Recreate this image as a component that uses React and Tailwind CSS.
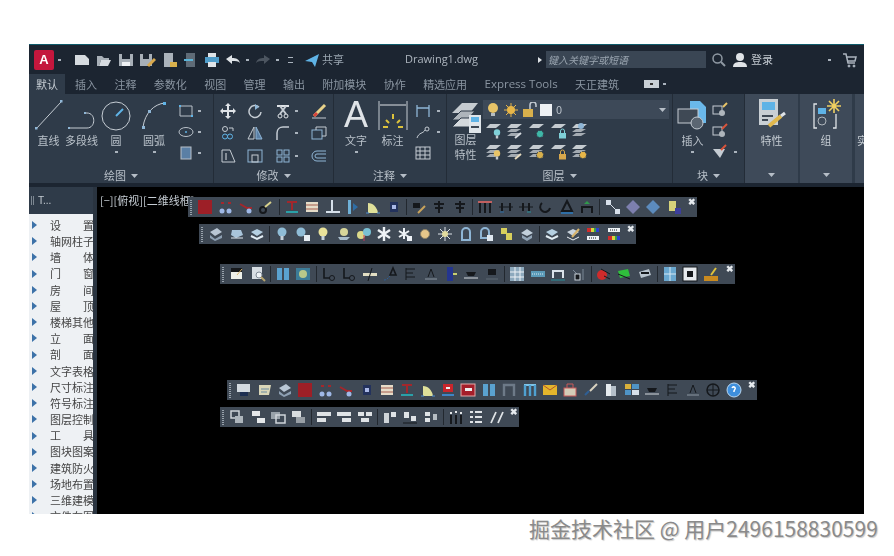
import React from "react";

const cjk = "font-['Noto_Sans_CJK_SC','Noto_Sans',sans-serif]";

const Svg = ({ w = 16, h = 16, children, className = "" }) => (
  <svg width={w} height={h} viewBox={`0 0 ${w} ${h}`} fill="none" stroke="#aeb7c1" strokeWidth="1" className={`shrink-0 ${className}`}>
    {children}
  </svg>
);

const Dot = ({ className = "" }) => <span className={`block h-[2px] w-[3px] shrink-0 bg-[#aab3bd] ${className}`} />;

const Caret = () => (
  <svg width="7" height="4" viewBox="0 0 7 4" className="shrink-0"><path d="M0 0h7L3.5 4z" fill="#b6bec7" /></svg>
);

// floating toolbar glyphs, 16 x 16
const glyphs = {
  red: <rect x="1" y="1" width="14" height="14" fill="#9d1f27" stroke="none" />,
  cols: <><path d="M3 4h3M10 4h3" stroke="#a3272c" strokeWidth="2" /><circle cx="4" cy="12" r="2.5" fill="#9fb8e6" stroke="none" /><circle cx="11" cy="12" r="2.5" fill="#9fb8e6" stroke="none" /></>,
  beam: <><path d="M2 5l7 4h5" stroke="#a3272c" strokeWidth="2" /><circle cx="11" cy="12" r="2.5" fill="#9fb8e6" stroke="none" /></>,
  gear: <><circle cx="5" cy="11" r="3" stroke="#15181c" strokeWidth="2" /><path d="M7 8l6-5" stroke="#d9d28c" strokeWidth="2" /></>,
  stair: <><path d="M3 3h10" stroke="#a3272c" strokeWidth="2" /><path d="M8 4v7" stroke="#a3272c" strokeWidth="2" /><path d="M2 13h12" stroke="#2aa0a8" strokeWidth="2" /></>,
  wall: <><rect x="2" y="3" width="12" height="10" fill="#e5dcc8" stroke="none" /><path d="M2 6h12M2 10h12" stroke="#a35d4e" /></>,
  ell: <path d="M7 1v11M1 13h14" stroke="#d6e0ea" strokeWidth="2" />,
  bar: <><rect x="3" y="1" width="3" height="14" fill="#6fb1d8" stroke="none" /><path d="M8 4l5 4-5 4z" fill="#2f6ea5" stroke="none" /></>,
  dome: <><path d="M3 14V4c5 0 9 4 10 10z" fill="#dfe09a" stroke="none" /><path d="M1 14h3M12 14h3" stroke="#4f8fd0" /></>,
  chip: <><rect x="4" y="3" width="8" height="10" fill="#23325c" stroke="none" /><rect x="6" y="6" width="4" height="4" fill="#a9b8e6" stroke="none" /></>,
  fan: <><path d="M2 4h7v5H2z" fill="#15181c" stroke="none" /><path d="M7 14l7-7" stroke="#c9a35c" strokeWidth="2" /></>,
  tree: <path d="M8 2v12M3 5h10M4 9h8" stroke="#15181c" strokeWidth="2" />,
  rails: <><path d="M1 3h14" stroke="#c26060" strokeWidth="2" /><path d="M3 4v10M8 4v10M13 4v10" stroke="#15181c" strokeWidth="2" /></>,
  dim: <><path d="M1 8h14" stroke="#15181c" /><path d="M4 4v8M12 4v8" stroke="#15181c" strokeWidth="2" /><path d="M2 13h4" stroke="#2f6ea5" /></>,
  dim2: <><path d="M1 8h14" stroke="#15181c" /><path d="M5 4v8M11 4v8" stroke="#15181c" strokeWidth="2" /><path d="M9 13h4" stroke="#2a8f9a" /></>,
  moon: <path d="M4 4a5 5 0 1 0 8 5" stroke="#15181c" strokeWidth="2" />,
  tri: <><path d="M8 2l5 10H3z" stroke="#15181c" strokeWidth="2" /><path d="M2 14h12" stroke="#2f6ea5" strokeWidth="2" /></>,
  arch: <><path d="M3 14V8h10v6" stroke="#15181c" strokeWidth="2" /><path d="M5 5l3-3 3 3z" fill="#2f9a4a" stroke="none" /></>,
  nodes: <><rect x="1" y="1" width="5" height="5" fill="#d8e0ea" stroke="none" /><path d="M4 4l8 8" stroke="#d8e0ea" /><rect x="10" y="10" width="5" height="5" fill="#d8e0ea" stroke="none" /></>,
  dia: <path d="M8 1l7 7-7 7-7-7z" fill="#7d7fae" stroke="none" />,
  dia2: <path d="M8 1l7 7-7 7-7-7z" fill="#5c8bbd" stroke="none" />,
  note: <><path d="M3 2h7v10H3z" fill="#d6d27a" stroke="none" /><rect x="9" y="9" width="6" height="6" fill="#3d3f9c" stroke="none" /></>,
  slab: <><path d="M2 6l7-4 5 4-7 4z" fill="#b9c6d4" stroke="none" /><path d="M2 9l5 4 7-4v3l-7 3-5-3z" fill="#8ea0b3" stroke="none" /></>,
  slab2: <><path d="M3 4h9l2 5-7 3-5-3z" fill="#a9c4da" stroke="none" /><path d="M2 12h12" stroke="#e5edf5" /></>,
  bulb: <><circle cx="8" cy="6" r="4.5" fill="#8fbcd6" stroke="none" /><rect x="6.5" y="10" width="3" height="4" fill="#c6d2dc" stroke="none" /></>,
  bulbDoc: <><circle cx="6" cy="6" r="4.5" fill="#8fbcd6" stroke="none" /><rect x="9" y="9" width="6" height="6" fill="#e8eef3" stroke="none" /></>,
  bulbY: <><circle cx="8" cy="6" r="4.5" fill="#e9e29a" stroke="none" /><rect x="6.5" y="10" width="3" height="4" fill="#c6d2dc" stroke="none" /></>,
  lamp: <><circle cx="8" cy="6" r="4" fill="#d8d69a" stroke="none" /><path d="M2 11h12l-3 3H4z" fill="#a9bdcc" stroke="none" /></>,
  twin: <><circle cx="5" cy="9" r="4" fill="#dcd98a" stroke="none" /><circle cx="11" cy="6" r="4" fill="#79c0d4" stroke="none" /><path d="M8 9v6" stroke="#c23a5a" /></>,
  star: <path d="M8 1v14M2 4l12 8M14 4L2 12" stroke="#eef2f6" strokeWidth="2.4" />,
  star2: <><path d="M7 2v11M2 5l10 6M12 5L2 11" stroke="#eef2f6" strokeWidth="2" /><rect x="10" y="10" width="5" height="5" fill="#eef2f6" stroke="none" /></>,
  sun: <circle cx="8" cy="8" r="4.5" fill="#e6c68a" stroke="#8d8064" />,
  sun2: <><path d="M8 1v14M1 8h14M3 3l10 10M13 3L3 13" stroke="#dfe4ea" /><circle cx="8" cy="8" r="3" fill="#e3dca0" stroke="none" /></>,
  ghost: <><path d="M4 14V6a4 4 0 0 1 8 0v8z" stroke="#8fb6d6" strokeWidth="2" /></>,
  ghost2: <><path d="M3 12V6a4 4 0 0 1 8 0v6z" stroke="#8fb6d6" strokeWidth="2" /><rect x="9" y="9" width="6" height="6" fill="#dfe8f0" stroke="none" /></>,
  tag: <><path d="M2 2h6v5h5v7H7V8H2z" fill="#d8cf5c" stroke="none" /></>,
  cake: <><path d="M2 7l6-4 6 4-6 3z" fill="#c2d0dc" stroke="none" /><path d="M3 9l5 3 5-3v3l-5 3-5-3z" fill="#93a6b8" stroke="none" /></>,
  open: <><path d="M2 6l6-3 6 3-6 4z" fill="#b5d0e2" stroke="none" /><path d="M2 10l6 3 6-3" stroke="#e3eef5" strokeWidth="2" /></>,
  pen: <><path d="M2 6l6-3 6 3-6 4z" fill="#c9d3dc" stroke="none" /><path d="M7 11l7-8" stroke="#d8b46c" strokeWidth="2" /><path d="M2 11l6 3 6-3" stroke="#eef2f6" /></>,
  rgbT: <><path d="M2 2h12v4H2z" fill="#35a04a" stroke="none" /><path d="M2 2h4v4H2z" fill="#d02b2b" stroke="none" /><path d="M6 2h3v4H6z" fill="#dcd23c" stroke="none" /><path d="M11 2h3v4h-3z" fill="#2b3fd0" stroke="none" /><rect x="2" y="10" width="12" height="4" fill="#eef2f6" stroke="none" /><path d="M4 12h8" stroke="#15181c" strokeDasharray="1 1" /></>,
  rgbB: <><rect x="2" y="2" width="12" height="4" fill="#eef2f6" stroke="none" /><path d="M4 4h8" stroke="#15181c" strokeDasharray="1 1" /><path d="M2 10h12v4H2z" fill="#35a04a" stroke="none" /><path d="M2 10h4v4H2z" fill="#d02b2b" stroke="none" /><path d="M6 10h3v4H6z" fill="#dcd23c" stroke="none" /><path d="M11 10h3v4h-3z" fill="#2b3fd0" stroke="none" /></>,
  frame: <><rect x="2" y="2" width="11" height="11" fill="#eef0ea" stroke="none" /><rect x="2" y="2" width="11" height="4" fill="#17191c" stroke="none" /><path d="M8 9l5-6" stroke="#d8b46c" /></>,
  zoom: <><rect x="2" y="1" width="10" height="12" fill="#d7dde3" stroke="none" /><circle cx="9" cy="9" r="3" fill="#eef2f6" stroke="#7f8a95" /><path d="M11 11l4 4" stroke="#b5a36c" strokeWidth="2" /></>,
  cols2: <><rect x="2" y="2" width="5" height="12" fill="#5aa2d0" stroke="none" /><rect x="9" y="2" width="5" height="12" fill="#5aa2d0" stroke="none" /></>,
  mapG: <><rect x="1" y="2" width="14" height="12" fill="#3c7c98" stroke="none" /><circle cx="8" cy="8" r="4" fill="#b9c98a" stroke="none" /></>,
  lc: <><path d="M3 2v10h6" stroke="#15181c" strokeWidth="1.6" /><circle cx="11" cy="12" r="2.5" stroke="#15181c" /></>,
  cut: <><rect x="1" y="7" width="14" height="3" fill="#e3dfc4" stroke="none" /><path d="M10 2L6 15" stroke="#15181c" /></>,
  ah: <><path d="M2 14c3 0 4-2 6-4" stroke="#2f5f95" strokeDasharray="2 1" /><path d="M8 9l3-7 3 7z" stroke="#15181c" strokeWidth="1.6" /></>,
  lines: <path d="M4 2v12M4 3h9M4 7h7M4 11h9" stroke="#15181c" />,
  ahat: <><path d="M8 3l-3 8M8 3l3 8" stroke="#15181c" /><path d="M2 13h12" stroke="#8d98a3" /></>,
  door: <><rect x="4" y="1" width="6" height="14" fill="#24358f" stroke="none" /><path d="M10 8h4" stroke="#c9cf70" strokeWidth="2" /></>,
  hat: <><path d="M3 6h10l-2 4H5z" fill="#15181c" stroke="none" /><path d="M1 12h14" stroke="#d6dbe0" /></>,
  fig: <><path d="M4 3h8v6H4z" fill="#15181c" stroke="none" /><path d="M2 13h12" stroke="#5f6a75" /></>,
  grid: <><rect x="1" y="1" width="14" height="14" fill="#8da9bd" stroke="none" /><path d="M6 1v14M11 1v14M1 6h14M1 11h14" stroke="#eef2f6" /></>,
  rule: <><rect x="1" y="5" width="14" height="6" fill="#5b9ab8" stroke="none" /><path d="M2 8h12" stroke="#dbe8ef" strokeDasharray="1 1" /></>,
  gate: <><path d="M3 12V5h10v7" stroke="#dbe3ea" strokeWidth="2" /><path d="M1 14h14" stroke="#2a8f9a" /></>,
  post: <><path d="M3 4l4 4M13 3v11" stroke="#7b8896" /><rect x="5" y="8" width="5" height="6" fill="#15181c" stroke="#c9d2da" /></>,
  ballR: <><circle cx="6" cy="9" r="5" fill="#d02b2b" stroke="none" /><path d="M5 3l9 5M8 10l6 3" stroke="#15181c" /></>,
  ballG: <><path d="M2 5l10-2 2 7-10 2z" fill="#2fbf3c" stroke="none" /><path d="M2 8l12 5" stroke="#15181c" /></>,
  ballW: <><path d="M2 6l10-3 2 6-10 3z" fill="#b9c4ce" stroke="none" /><path d="M4 7h8" stroke="#15181c" strokeWidth="2" /></>,
  tile: <><rect x="2" y="1" width="12" height="14" fill="#6aa8d0" stroke="none" /><path d="M8 1v14M2 8h12" stroke="#d6e8f3" /></>,
  target: <><rect x="1" y="1" width="14" height="14" fill="#e6eaee" stroke="#15181c" /><rect x="5" y="5" width="6" height="6" fill="#15181c" stroke="none" /></>,
  bars: <><path d="M1 10h14v5H1z" fill="#c98a20" stroke="none" /><path d="M8 9l5-7" stroke="#dfc23c" strokeWidth="2" /></>,
  deskTop: <><rect x="1" y="2" width="13" height="8" fill="#d3dae0" stroke="none" /><rect x="4" y="10" width="8" height="4" fill="#1d2f52" stroke="none" /></>,
  slip: <><path d="M2 3h12l-2 10H2z" fill="#d9d6b8" stroke="none" /><path d="M4 7h8M4 10h6" stroke="#6b8ba0" /></>,
  m2: <><path d="M2 12h12v2H2z" fill="#3f84c5" stroke="none" /><rect x="3" y="2" width="10" height="8" fill="#c9262c" stroke="none" /><rect x="6" y="5" width="4" height="2" fill="#eee" stroke="none" /></>,
  m2b: <><rect x="1" y="2" width="14" height="12" fill="#a51e2a" stroke="#e3a9a9" /><rect x="5" y="6" width="7" height="3" fill="#eee" stroke="none" /></>,
  gateB: <path d="M3 14V3h10v11" stroke="#6d7a88" strokeWidth="2.4" />,
  gateC: <><path d="M2 3h12" stroke="#7ec4e8" strokeWidth="2" /><path d="M3 14V3M8 14V3M13 14V3" stroke="#4fa0d0" strokeWidth="2.4" /></>,
  mail: <><rect x="1" y="3" width="14" height="10" fill="#e3b52c" stroke="none" /><path d="M1 3l7 5 7-5" stroke="#b3542c" /></>,
  house: <><rect x="2" y="6" width="12" height="8" fill="#d3ccb8" stroke="#c85a5a" /><path d="M5 6V2h6v4" stroke="#c85a5a" /></>,
  brush: <><path d="M14 2L7 9" stroke="#d9d2c0" strokeWidth="2" /><path d="M6 9l-4 4" stroke="#2f5f95" strokeWidth="2" /></>,
  book: <><rect x="3" y="2" width="5" height="12" fill="#e6ebef" stroke="none" /><rect x="8" y="4" width="5" height="10" fill="#b5c0ca" stroke="none" /></>,
  panes: <><rect x="1" y="2" width="6" height="5" fill="#d9b03a" stroke="none" /><rect x="8" y="2" width="7" height="5" fill="#4f93c5" stroke="none" /><rect x="1" y="8" width="6" height="5" fill="#4f93c5" stroke="none" /><rect x="8" y="8" width="7" height="5" fill="#d6e0ea" stroke="none" /></>,
  globe: <><circle cx="8" cy="8" r="6" stroke="#15181c" strokeWidth="1.5" /><path d="M2 8h12M8 2v12" stroke="#15181c" /></>,
  help: <><circle cx="8" cy="8" r="7" fill="#3f8fdc" stroke="#b9d6ef" /><path d="M6 6c1-2 4-1 3 1l-1 2v1" stroke="#fff" strokeWidth="1.5" /></>,
  s1: <><rect x="2" y="2" width="8" height="7" stroke="#cfd5da" strokeWidth="1.5" /><rect x="6" y="7" width="8" height="7" fill="#aeb6bd" stroke="none" /></>,
  s2: <><rect x="2" y="2" width="8" height="5" fill="#e5e8ea" stroke="none" /><rect x="7" y="9" width="8" height="5" fill="#e5e8ea" stroke="none" /></>,
  s3: <><rect x="1" y="3" width="9" height="7" fill="#98a1a9" stroke="none" /><rect x="6" y="6" width="9" height="8" stroke="#cfd5da" strokeWidth="1.5" /></>,
  s4: <><rect x="2" y="2" width="9" height="6" fill="#d9dde0" stroke="none" /><rect x="6" y="8" width="9" height="6" fill="#989fa6" stroke="none" /></>,
  a1: <><rect x="1" y="3" width="14" height="4" fill="#dfe3e6" stroke="none" /><rect x="1" y="9" width="9" height="4" fill="#dfe3e6" stroke="none" /></>,
  a2: <><rect x="1" y="3" width="14" height="4" fill="#dfe3e6" stroke="none" /><rect x="6" y="9" width="9" height="4" fill="#dfe3e6" stroke="none" /></>,
  a3: <><rect x="1" y="3" width="6" height="4" fill="#dfe3e6" stroke="none" /><rect x="9" y="3" width="6" height="4" fill="#dfe3e6" stroke="none" /><rect x="4" y="9" width="8" height="4" fill="#dfe3e6" stroke="none" /></>,
  b1: <><rect x="2" y="4" width="5" height="10" fill="#cfd4d8" stroke="none" /><rect x="9" y="3" width="5" height="5" fill="#dfe3e6" stroke="none" /></>,
  b2: <><rect x="2" y="3" width="5" height="6" fill="#dfe3e6" stroke="none" /><rect x="9" y="7" width="5" height="5" fill="#dfe3e6" stroke="none" /><path d="M1 14h14" stroke="#15181c" /></>,
  b3: <><rect x="2" y="3" width="5" height="4" fill="#dfe3e6" stroke="none" /><rect x="2" y="9" width="5" height="4" fill="#dfe3e6" stroke="none" /><rect x="10" y="5" width="4" height="6" fill="#b5bcc2" stroke="none" /></>,
  c1: <><path d="M3 6v9M8 6v9M13 6v9" stroke="#15181c" strokeWidth="2" /><path d="M2 4h2M7 3h2M12 4h2" stroke="#e3e6e8" strokeWidth="2" /></>,
  c2: <path d="M2 3h3M2 8h3M2 13h3M7 3h7M7 8h7M7 13h7" stroke="#dfe3e6" strokeWidth="1.8" />,
  c3: <path d="M2 14L7 3M9 14l5-11" stroke="#dfe3e6" strokeWidth="1.8" />,
};

const toolbars = [
  { top: "top-[10px]", left: "left-[91px]", w: "w-[509px]", groups: [["red", "cols", "beam", "gear"], ["stair", "wall", "ell", "bar", "dome", "chip"], ["fan", "tree", "tree"], ["rails", "dim", "dim2", "moon", "tri", "arch"], ["nodes", "dia", "dia2", "note"]] },
  { top: "top-[37px]", left: "left-[102px]", w: "w-[437px]", groups: [["slab", "slab2", "open"], ["bulb", "bulbDoc", "bulbY", "lamp", "twin", "star", "star2", "sun", "sun2", "ghost", "ghost2", "tag", "cake"], ["open", "pen", "rgbT", "rgbB"]] },
  { top: "top-[77px]", left: "left-[123px]", w: "w-[515px]", groups: [["frame", "zoom"], ["cols2", "mapG"], ["lc", "lc", "cut", "ah", "lines", "ahat", "door", "hat", "fig"], ["grid", "rule", "gate", "post"], ["ballR", "ballG", "ballW"], ["tile", "target", "bars"]] },
  { top: "top-[193px]", left: "left-[130px]", w: "w-[530px]", groups: [["deskTop", "slip", "slab", "red", "cols", "beam", "chip", "wall", "stair", "dome", "m2", "m2b", "cols2", "gateB", "gateC", "mail", "house", "brush", "book", "panes", "hat", "lines", "ahat", "globe", "help"]] },
  { top: "top-[220px]", left: "left-[123px]", w: "w-[299px]", groups: [["s1", "s2", "s3", "s4"], ["a1", "a2", "a3"], ["b1", "b2", "b3"], ["c1", "c2", "c3"]] },
];

const Toolbar = ({ bar }) => (
  <div className={`absolute flex h-[20px] items-center bg-[#3f4955] ${bar.top} ${bar.left} ${bar.w}`}>
    <span className="ml-[2px] mr-[3px] h-[15px] w-[2px] shrink-0 border-x border-dotted border-[#98a2ac]" />
    {bar.groups.map((g, i) => (
      <React.Fragment key={i}>
        {i > 0 && <span className="mx-[2px] h-[16px] w-[1px] shrink-0 bg-[#22282f]" />}
        {g.map((name, j) => (
          <span key={j} className="flex w-[20.4px] shrink-0 justify-center">
            <Svg>{glyphs[name]}</Svg>
          </span>
        ))}
      </React.Fragment>
    ))}
    <span className="ml-auto mr-[1px] self-start text-[9px] font-bold leading-[10px] text-[#e6eaee] font-['Liberation_Sans',sans-serif]">✖</span>
  </div>
);

const tabs = ["插入", "注释", "参数化", "视图", "管理", "输出", "附加模块", "协作", "精选应用", "Express Tools", "天正建筑"];

const menu = [
  ["设", "置"], ["轴网柱子"], ["墙", "体"], ["门", "窗"], ["房", "间"], ["屋", "顶"], ["楼梯其他"], ["立", "面"], ["剖", "面"],
  ["文字表格"], ["尺寸标注"], ["符号标注"], ["图层控制"], ["工", "具"], ["图块图案"], ["建筑防火"], ["场地布置"], ["三维建模"], ["文件布图"],
];

const TitleBar = () => (
  <div className="flex h-[30px] shrink-0 items-center border-t border-[#0f5b6b] bg-[#1c2531]">
    <div className="ml-[5px] flex h-[20px] w-[20px] items-center justify-center rounded-[2px] bg-[#c4173d] text-[13px] font-bold text-white font-['Liberation_Sans',sans-serif]">A</div>
    <Dot className="ml-[4px]" />
    <div className="ml-[13px] flex items-center gap-[6px]">
      <Svg><path d="M1 3h10l4 4v6H1z" fill="#d6dbe0" stroke="none" /></Svg>
      <Svg><path d="M1 4h5l2 2h5v2H5l-2 6H1z" fill="#a8b0b8" stroke="none" /><path d="M5 8h10l-3 6H3z" fill="#d6dbe0" stroke="none" /></Svg>
      <Svg><rect x="1" y="2" width="14" height="12" fill="#a8b0b8" stroke="none" /><rect x="4" y="2" width="8" height="5" fill="#1c2531" stroke="none" /><rect x="4" y="10" width="8" height="4" fill="#eef1f4" stroke="none" /></Svg>
      <Svg><rect x="0" y="2" width="12" height="12" fill="#a8b0b8" stroke="none" /><rect x="3" y="2" width="6" height="5" fill="#1c2531" stroke="none" /><path d="M8 14l7-7" stroke="#d8a84c" strokeWidth="3" /></Svg>
      <Svg><rect x="2" y="1" width="9" height="14" fill="#aab2ba" stroke="none" /><path d="M8 10h7v5H8z" fill="#d8b04c" stroke="none" /></Svg>
    </div>
    <div className="ml-[5px] flex items-center gap-[5px]">
      <Svg><rect x="3" y="1" width="9" height="14" fill="#5f6b77" stroke="none" /><path d="M1 8h9" stroke="#5cb4d8" strokeWidth="2" /></Svg>
      <Svg><rect x="4" y="1" width="8" height="4" fill="#dfe3e7" stroke="none" /><rect x="1" y="5" width="14" height="6" fill="#4f9cc9" stroke="none" /><rect x="4" y="10" width="8" height="5" fill="#dfe3e7" stroke="none" /></Svg>
      <Svg><path d="M1 7l6-4v3c4 0 7 1 8 5-2-2-4-2-8-2v3z" fill="#dfe3e7" stroke="none" /></Svg>
    </div>
    <Dot className="ml-[5px]" />
    <Svg className="ml-[6px]"><path d="M15 7L9 3v3C5 6 2 7 1 11c2-2 4-2 8-2v3z" fill="#4c5560" stroke="none" /></Svg>
    <Dot className="ml-[5px]" />
    <span className="ml-[9px] h-[6px] w-[5px] border-t border-b border-[#aab3bd]" />
    <Svg className="ml-[11px]"><path d="M1 9L15 2l-4 13-3-5z" fill="#5fb3e6" stroke="none" /></Svg>
    <span className={`ml-[2px] text-[11px] text-[#9aa5b0] ${cjk}`}>共享</span>
    <span className="ml-[61px] w-[90px] text-[11px] text-[#aeb6bf] font-['Open_Sans',sans-serif]">Drawing1.dwg</span>
    <span className="ml-[43px] h-0 w-0 border-y-[3px] border-l-[4px] border-y-transparent border-l-[#dfe3e7]" />
    <div className={`ml-[4px] flex h-[17px] w-[160px] items-center bg-[#3a4654] pl-[2px] text-[10px] italic text-[#9aa5b0] ${cjk}`}>键入关键字或短语</div>
    <Svg className="ml-[5px]"><circle cx="6.5" cy="6.5" r="4.5" stroke="#8f99a3" strokeWidth="1.5" /><path d="M10 10l4 4" stroke="#8f99a3" strokeWidth="2" /></Svg>
    <Svg className="ml-[5px]"><circle cx="8" cy="5" r="4" fill="#dfe3e7" stroke="none" /><path d="M1 15c0-4 3-5 7-5s7 1 7 5z" fill="#dfe3e7" stroke="none" /></Svg>
    <span className={`ml-[3px] text-[11px] text-[#c3cad1] ${cjk}`}>登录</span>
    <Dot className="ml-[55px]" />
    <Svg className="ml-[11px]"><path d="M1 2h3l2 9h7M5 5h9l-1 4H6" stroke="#aab3bd" strokeWidth="1.5" /><circle cx="7" cy="14" r="1" fill="#aab3bd" /><circle cx="12" cy="14" r="1" fill="#aab3bd" /></Svg>
  </div>
);

const TabBar = () => (
  <div className={`flex h-[20px] shrink-0 items-center bg-[#1c2531] text-[11px] text-[#8a95a1] ${cjk}`}>
    <div className="flex h-full w-[36px] items-center justify-center bg-[#2f3b49] text-[#c5ccd3]">默认</div>
    <div className="ml-[10px] flex items-center gap-[17.4px]">
      {tabs.map((t) => (
        <span key={t} className={t === "Express Tools" ? "font-['Open_Sans',sans-serif] text-[11.5px]" : ""}>{t}</span>
      ))}
    </div>
    <span className="ml-[25px] flex h-[8px] w-[15px] items-center justify-center bg-[#c9d0d6]"><span className="h-[2px] w-[3px] bg-[#333]" /></span>
    <Dot className="ml-[4px]" />
  </div>
);

const Big = ({ className = "", icon, label, dot }) => (
  <div className={`flex shrink-0 flex-col items-center ${className}`}>
    <div className="flex h-[33px] items-end justify-center">{icon}</div>
    <span className="mt-[1px] h-[16px] whitespace-nowrap text-[11px] leading-[16px] text-[#b9c1c9]">{label}</span>
    {dot && <Dot className="mt-[3px]" />}
  </div>
);

const Panel = ({ w, title, children, tone = "" }) => (
  <div className={`flex shrink-0 flex-col border-r border-[#232c37] ${w} ${tone}`}>
    <div className="flex h-[74px] shrink-0 pt-[4px]">{children}</div>
    {title && (
      <div className="flex h-[15px] items-center justify-center gap-[5px] text-[11px] text-[#b9c1c9]">
        {title}
        <Caret />
      </div>
    )}
  </div>
);

const Cell = ({ children, dot, start }) => (
  <div className={`flex h-[21px] items-center ${start ? "justify-start gap-[6px]" : "justify-center gap-[4px]"}`}>
    {children}
    {dot && <Dot />}
  </div>
);

// layer tool: grey sheet(s) with a coloured badge in the corner
const layerTools = [
  [false, "bulb", "#7fd0d8"], [true, "pen", "#d6dbe0"], [false, "gear", "#3fb8a8"], [false, "lock", "#7fd0d8"], [true, "tower", "#8fb6d6"],
  [true, "bulb", "#e8c468"], [true, "pen", "#e8dcc0"], [true, "gear", "#d8b04c"], [false, "lock", "#d8a84c"], [true, "gear", "#e8b648"],
];

const LayerTool = ({ stack, badge, color }) => (
  <Svg w={18} h={16}>
    <path d="M1 5l4-4h11l-5 4z" fill="#c5cbd0" stroke="none" />
    {stack && <path d="M1 9l4-3h10l-5 3zM1 13l4-3h10l-5 3z" fill="#a4abb2" stroke="none" />}
    {badge === "tower" && <circle cx="10" cy="3" r="3" fill={color} stroke="none" />}
    {badge === "pen" && <path d="M9 15l6-5" stroke={color} strokeWidth="2" />}
    {badge === "bulb" && <><circle cx="12" cy="9.5" r="3.2" fill={color} stroke="none" /><rect x="10.8" y="12.5" width="2.4" height="3" fill="#c5cbd0" stroke="none" /></>}
    {badge === "gear" && <circle cx="12" cy="11" r="3.5" fill={color} stroke="#2f3b49" strokeDasharray="2 1" />}
    {badge === "lock" && <><rect x="9" y="10" width="7" height="5.5" fill={color} stroke="none" /><path d="M10.5 10V8a2 2 0 0 1 4 0v2" stroke={color} /></>}
  </Svg>
);

const Ribbon = () => (
  <div className={`flex h-[89px] shrink-0 bg-[#2f3b49] ${cjk}`}>
    <Panel w="w-[185px]" title="绘图">
      <Big className="ml-[2px] w-[35px]" label="直线" icon={<Svg w={30} h={32}><path d="M2 30L27 3" stroke="#c5ccd3" /><rect x="1" y="28" width="2.5" height="2.5" fill="#8fb6d6" stroke="none" /><rect x="26" y="1" width="2.5" height="2.5" fill="#8fb6d6" stroke="none" /></Svg>} />
      <Big className="w-[31px]" label="多段线" icon={<Svg w={30} h={22}><path d="M2 19h18c9 0 9-15 0-15h-2" stroke="#c5ccd3" /><rect x="1" y="18" width="2" height="2" fill="#8fb6d6" stroke="none" /><rect x="17" y="3" width="2" height="2" fill="#8fb6d6" stroke="none" /></Svg>} />
      <Big className="w-[38px]" label="圆" dot icon={<Svg w={30} h={30}><circle cx="15" cy="15" r="14" stroke="#c5ccd3" /><path d="M15 15l7-7" stroke="#5fb3e6" strokeWidth="2" /></Svg>} />
      <Big className="w-[38px]" label="圆弧" dot icon={<Svg w={28} h={30}><path d="M3 26C5 12 14 3 25 2" stroke="#c5ccd3" /><rect x="2" y="25" width="3" height="3" fill="#8fb6d6" stroke="none" /><rect x="23" y="1" width="3" height="3" fill="#5fb3e6" stroke="none" /><rect x="8" y="9" width="3" height="3" fill="#8fb6d6" stroke="none" /></Svg>} />
      <div className="ml-[1px] flex w-[30px] flex-col pt-[2px]">
        <Cell dot><Svg><path d="M2 3h12v10H2z" stroke="#b9c1c9" /><path d="M1 3h2M13 13h2" stroke="#5fb3e6" strokeWidth="2" /></Svg></Cell>
        <Cell dot><Svg><ellipse cx="8" cy="8" rx="7" ry="4.5" stroke="#b9c1c9" /><circle cx="8" cy="8" r="1" fill="#5fb3e6" stroke="none" /></Svg></Cell>
        <Cell dot><Svg><rect x="3" y="2" width="10" height="12" fill="#5a7fa5" stroke="#b9c1c9" /></Svg></Cell>
      </div>
    </Panel>
    <Panel w="w-[120px]" title="修改">
      <div className="grid grid-cols-[27px_27px_37px_27px] pt-[2px]">
        <Cell><Svg><path d="M8 1v14M1 8h14" stroke="#dfe3e7" strokeWidth="2" /><path d="M8 0l3 3H5zM8 16l3-3H5zM0 8l3-3v6zM16 8l-3-3v6z" fill="#dfe3e7" stroke="none" /></Svg></Cell>
        <Cell><Svg><path d="M12 4a6 6 0 1 0 2 5" stroke="#c5ccd3" strokeWidth="1.5" /><path d="M8 1l4 3-4 3z" fill="#8fb6d6" stroke="none" /></Svg></Cell>
        <Cell dot><Svg><path d="M2 3h12" stroke="#dfe3e7" strokeWidth="2" /><path d="M5 3l6 8M11 3l-6 8" stroke="#c5ccd3" strokeWidth="2" /><circle cx="5" cy="13" r="2" stroke="#dfe3e7" /><circle cx="11" cy="13" r="2" stroke="#dfe3e7" /></Svg></Cell>
        <Cell><Svg><path d="M14 2L3 13" stroke="#e8d28a" strokeWidth="3" /><path d="M1 15h14" stroke="#c5ccd3" /><path d="M3 13l3-3" stroke="#d8443c" strokeWidth="3" /></Svg></Cell>
        <Cell><Svg><circle cx="5" cy="4" r="2.5" stroke="#c5ccd3" /><path d="M9 3h4v3" stroke="#c5ccd3" /><circle cx="5" cy="11.5" r="2.5" stroke="#5fb3e6" /><circle cx="10" cy="11.5" r="2.5" stroke="#5fb3e6" /></Svg></Cell>
        <Cell><Svg><path d="M7 2v12H1z" stroke="#c5ccd3" /><path d="M9 2v12h6z" fill="#5a7fa5" stroke="#8fb6d6" /></Svg></Cell>
        <Cell dot><Svg><path d="M2 15V8c0-4 3-6 6-6h6" stroke="#c5ccd3" strokeWidth="1.5" /></Svg></Cell>
        <Cell><Svg><rect x="1" y="5" width="10" height="9" stroke="#8fb6d6" /><path d="M5 5V2h10v9h-4" stroke="#c5ccd3" /></Svg></Cell>
        <Cell><Svg><path d="M2 2h8l5 12H2z" stroke="#c5ccd3" /><path d="M6 5v7" stroke="#dfe3e7" /></Svg></Cell>
        <Cell><Svg><rect x="1" y="2" width="14" height="12" stroke="#8fb6d6" /><rect x="5" y="7" width="6" height="7" stroke="#c5ccd3" /></Svg></Cell>
        <Cell dot><Svg><rect x="2" y="2" width="5" height="5" stroke="#8fb6d6" /><rect x="9" y="2" width="5" height="5" stroke="#8fb6d6" /><rect x="2" y="9" width="5" height="5" stroke="#8fb6d6" /><rect x="9" y="9" width="5" height="5" stroke="#8fb6d6" /></Svg></Cell>
        <Cell><Svg><path d="M15 3H6a5 5 0 0 0 0 10h9M15 6H6a2 2 0 0 0 0 4h9" stroke="#8fb6d6" /></Svg></Cell>
      </div>
    </Panel>
    <Panel w="w-[113px]" title="注释">
      <Big className="ml-[9px] w-[26px]" label="文字" dot icon={<span className="text-[36px] font-normal leading-[33px] text-[#dfe3e7] font-['Liberation_Sans',sans-serif]">A</span>} />
      <Big className="ml-[9px] w-[29px]" label="标注" icon={<Svg w={30} h={31}><path d="M1 1v29M29 1v29" stroke="#c5ccd3" /><path d="M2 5h26" stroke="#dfe3e7" /><path d="M15 14v5M8 20l3 3M22 20l-3 3M5 27h5M20 27h5" stroke="#dcc23c" strokeWidth="2" /></Svg>} />
      <div className="ml-[8px] flex w-[32px] flex-col pt-[2px]">
        <Cell start dot><Svg><path d="M2 2v12M14 2v12M2 5h12" stroke="#8fb6d6" strokeWidth="1.3" /></Svg></Cell>
        <Cell start dot><Svg><path d="M2 14C4 8 8 10 10 6" stroke="#c5ccd3" /><circle cx="12" cy="5" r="2" stroke="#c5ccd3" /></Svg></Cell>
        <Cell start><Svg><rect x="1" y="2" width="14" height="12" stroke="#c5ccd3" /><path d="M1 6h14M1 10h14M5 2v12M10 2v12" stroke="#c5ccd3" /></Svg></Cell>
      </div>
    </Panel>
    <Panel w="w-[226px]" title="图层">
      <div className="ml-[2px] flex w-[33px] shrink-0 flex-col items-center pt-[3px]">
        <Svg w={32} h={33}>
          <path d="M2 12L12 2h16l-8 10z" fill="#c5cbd0" stroke="none" />
          <path d="M2 19l9-9h14l-8 9z" fill="#aeb5bb" stroke="#2f3b49" />
          <path d="M2 26l9-9h10v9z" fill="#d4d9dd" stroke="#2f3b49" />
          <rect x="19" y="14" width="12" height="18" fill="#dfe5ea" stroke="none" />
          <rect x="21" y="16" width="8" height="5" fill="#5fb3e6" stroke="none" />
          <path d="M21 26h8" stroke="#3f4955" strokeWidth="2" />
        </Svg>
        <span className="mt-[-2px] text-[11px] leading-[15px] text-[#b9c1c9]">图层</span>
        <span className="text-[11px] leading-[15px] text-[#b9c1c9]">特性</span>
      </div>
      <div className="ml-[1px] flex w-[186px] flex-col pt-[2px]">
        <div className="flex h-[19px] items-center bg-[#3d4958] pl-[2px]">
          <Svg w={14} h={16} className="ml-[1px]"><circle cx="7" cy="6" r="5" fill="#e8c468" stroke="none" /><rect x="5" y="11" width="4" height="3" fill="#b5bcc2" stroke="none" /></Svg>
          <Svg w={16} h={16} className="ml-[3px]"><circle cx="8" cy="8" r="4" fill="#e8b648" stroke="none" /><path d="M8 1v14M1 8h14M3 3l10 10M13 3L3 13" stroke="#e8b648" /></Svg>
          <Svg w={16} h={16} className="ml-[2px]"><rect x="2" y="7" width="10" height="8" fill="#d8b04c" stroke="none" /><path d="M9 7V3a3 3 0 0 1 6 0v2" stroke="#c5ccd3" strokeWidth="1.5" /></Svg>
          <span className="ml-[3px] h-[12px] w-[12px] bg-[#eef1f4]" />
          <span className="ml-[4px] text-[11px] text-[#b9c1c9]">0</span>
          <span className="ml-auto mr-[3px]"><Caret /></span>
        </div>
        <div className="mt-[4px] grid grid-cols-[repeat(5,21.6px)] gap-y-[5px]">
          {layerTools.map(([stack, badge, color], i) => (
            <div key={i} className="flex h-[16px] justify-center">
              <LayerTool stack={stack} badge={badge} color={color} />
            </div>
          ))}
        </div>
      </div>
    </Panel>
    <Panel w="w-[72px]" title="块">
      <Big className="ml-[4px] w-[31px]" label="插入" dot icon={<Svg w={31} h={32}><path d="M13 2h10l6 6v16H13z" fill="#6ab8ea" stroke="none" /><rect x="1" y="10" width="20" height="14" fill="#3f4955" stroke="#c5ccd3" /><circle cx="20" cy="24" r="6" fill="#5b6672" stroke="#c5ccd3" /></Svg>} />
      <div className="ml-[4px] flex w-[32px] flex-col pt-[1px]">
        <Cell start><Svg><rect x="1" y="4" width="9" height="8" stroke="#c5ccd3" /><circle cx="10" cy="11" r="3" fill="#aeb5bb" stroke="none" /><path d="M11 5l4-4" stroke="#e8c468" strokeWidth="2" /></Svg></Cell>
        <Cell start><Svg><rect x="1" y="4" width="9" height="8" stroke="#c5ccd3" /><circle cx="10" cy="11" r="3" fill="#aeb5bb" stroke="none" /><path d="M10 6l5-5" stroke="#d8543c" strokeWidth="2" /></Svg></Cell>
        <Cell start dot><Svg><path d="M1 5h12l-5 9z" fill="#c5ccd3" stroke="none" /><path d="M9 6l5-5" stroke="#d8543c" strokeWidth="2" /></Svg></Cell>
      </div>
    </Panel>
    <div className="flex w-[53px] shrink-0 flex-col items-center bg-[#3e4a59] pt-[4px]">
      <Svg w={30} h={31}>
        <rect x="2" y="1" width="19" height="26" fill="#c9cfd4" stroke="none" />
        <rect x="5" y="4" width="13" height="8" fill="#5fb3e6" stroke="none" />
        <path d="M5 18h11M5 22h6" stroke="#3f4955" strokeWidth="2" />
        <path d="M12 28L24 18" stroke="#e0b84c" strokeWidth="4" />
        <path d="M24 18l4-3" stroke="#dfe3e7" strokeWidth="3" />
      </Svg>
      <span className="mt-[3px] text-[11px] leading-[16px] text-[#c5ccd3]">特性</span>
      <span className="mt-auto mb-[6px]"><Caret /></span>
    </div>
    <div className="ml-[2px] flex w-[52px] shrink-0 flex-col items-center bg-[#3e4a59] pt-[4px]">
      <Svg w={30} h={31}>
        <path d="M6 6H3v24h3M22 30h3V16" stroke="#dfe3e7" strokeWidth="1.3" />
        <rect x="7" y="10" width="8" height="6" fill="#5fb3e6" stroke="none" />
        <circle cx="11" cy="23" r="4" stroke="#aeb5bb" />
        <path d="M23 1v14M16 8h14M18 3l10 10M28 3L18 13" stroke="#f0d060" strokeWidth="1.6" />
      </Svg>
      <span className="mt-[3px] text-[11px] leading-[16px] text-[#c5ccd3]">组</span>
      <span className="mt-auto mb-[6px]"><Caret /></span>
    </div>
    <div className="ml-[3px] flex min-w-0 flex-1 justify-start overflow-hidden bg-[#3e4a59] pl-[2px] pt-[38px]">
      <span className="text-[11px] leading-[16px] text-[#c5ccd3] whitespace-nowrap">实用</span>
    </div>
  </div>
);

const Palette = () => (
  <div className="flex w-[64px] shrink-0 flex-col">
    <div className="flex h-[27px] shrink-0 items-center bg-[#2f3b49] pl-[2px]">
      <span className="h-[9px] w-[3px] border-x border-[#7d8892]" />
      <span className="ml-[4px] text-[10px] text-[#c5ccd3] font-['Liberation_Sans',sans-serif]">T...</span>
    </div>
    <div className={`flex min-h-0 flex-1 flex-col overflow-hidden bg-[#eef1f4] pt-[3px] text-[11px] text-[#444] ${cjk}`}>
      {menu.map((m, i) => (
        <div key={i} className="flex h-[16.2px] shrink-0 items-center">
          <span className="ml-[3px] h-0 w-0 border-y-[4px] border-l-[5px] border-y-transparent border-l-[#3d72a8]" />
          <span className={`ml-[13px] flex w-[44px] shrink-0 overflow-hidden whitespace-nowrap ${m.length > 1 ? "justify-between" : ""}`}>
            {m.map((c) => <span key={c}>{c}</span>)}
          </span>
        </div>
      ))}
    </div>
  </div>
);

export default function App() {
  return (
    <div className={`flex h-[556px] w-[894px] flex-col overflow-hidden bg-white pt-[44px] ${cjk}`}>
      <div className="ml-[29px] flex h-[470px] w-[835px] shrink-0 flex-col overflow-hidden bg-[#1c2531] blur-[0.4px]">
        <TitleBar />
        <TabBar />
        <Ribbon />
        <div className="h-[4px] shrink-0 bg-[#1c2531]" />
        <div className="flex min-h-0 flex-1">
          <Palette />
          <div className="w-[4px] shrink-0 bg-[#2a3440]" />
          <div className="relative flex-1 overflow-hidden bg-black">
            <span className="absolute left-[3px] top-[5px] text-[11px] whitespace-nowrap text-[#c5ccd3]">[−][俯视][二维线框]</span>
            {toolbars.map((bar, i) => <Toolbar key={i} bar={bar} />)}
          </div>
        </div>
      </div>
      <div className="mt-[1px] pl-[529px] text-[21px] leading-[27px] whitespace-nowrap text-[#8a8a8a] [text-shadow:1px_1px_1px_#c8c8c8]">
        掘金技术社区 @ 用户2496158830599
      </div>
    </div>
  );
}
